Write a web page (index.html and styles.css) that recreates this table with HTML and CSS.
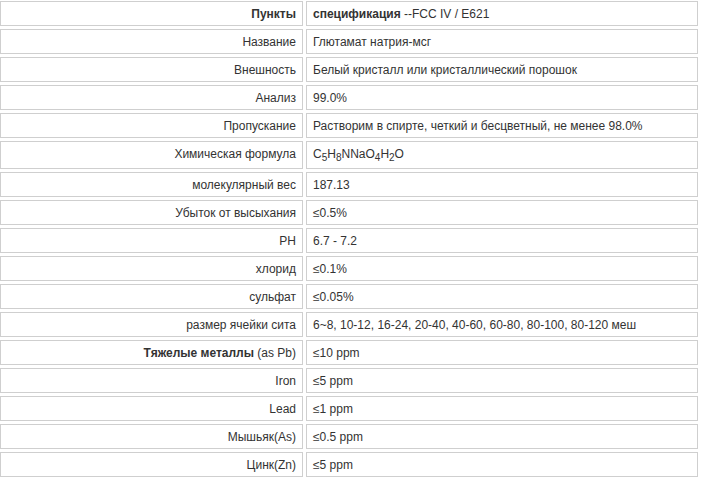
FILE: index.html
```html
<!DOCTYPE html>
<html lang="ru">
<head>
<meta charset="utf-8">
<link rel="stylesheet" href="styles.css">
</head>
<body>
<table class="spec">
  <tbody>
    <tr><td class="key"><b>Пункты</b></td><td class="val"><b>спецификация</b> --FCC IV / E621</td></tr>
    <tr><td class="key">Название</td><td class="val">Глютамат натрия-мсг</td></tr>
    <tr><td class="key">Внешность</td><td class="val">Белый кристалл или кристаллический порошок</td></tr>
    <tr><td class="key">Анализ</td><td class="val">99.0%</td></tr>
    <tr><td class="key">Пропускание</td><td class="val">Растворим в спирте, четкий и бесцветный, не менее 98.0%</td></tr>
    <tr class="formula"><td class="key">Химическая формула</td><td class="val">C<sub>5</sub>H<sub>8</sub>NNaO<sub>4</sub>H<sub>2</sub>O</td></tr>
    <tr><td class="key">молекулярный вес</td><td class="val">187.13</td></tr>
    <tr><td class="key">Убыток от высыхания</td><td class="val">≤0.5%</td></tr>
    <tr><td class="key">PH</td><td class="val">6.7 - 7.2</td></tr>
    <tr><td class="key">хлорид</td><td class="val">≤0.1%</td></tr>
    <tr><td class="key">сульфат</td><td class="val">≤0.05%</td></tr>
    <tr><td class="key">размер ячейки сита</td><td class="val">6~8, 10-12, 16-24, 20-40, 40-60, 60-80, 80-100, 80-120 меш</td></tr>
    <tr><td class="key"><b>Тяжелые металлы</b> (as Pb)</td><td class="val">≤10 ppm</td></tr>
    <tr><td class="key">Iron</td><td class="val">≤5 ppm</td></tr>
    <tr><td class="key">Lead</td><td class="val">≤1 ppm</td></tr>
    <tr><td class="key">Мышьяк(As)</td><td class="val">≤0.5 ppm</td></tr>
    <tr><td class="key">Цинк(Zn)</td><td class="val">≤5 ppm</td></tr>
  </tbody>
</table>
</body>
</html>
```
FILE: styles.css
```css
html, body {
  margin: 0;
  padding: 0;
  background: #fff;
}
body {
  font-family: "Liberation Sans", Arial, sans-serif;
  font-size: 12px;
  color: #333;
}
.spec {
  width: 704px;
  margin: -2px 0 0 -3px;
  border-collapse: separate;
  border-spacing: 3px;
}
.spec td {
  border: 1px solid #cfcfcf;
  padding: 5px 6px 4px;
  line-height: 14px;
  vertical-align: top;
}
.spec .key {
  width: 289px;
  text-align: right;
}
.spec .val {
  text-align: left;
}
.spec .formula td {
  padding-bottom: 7px;
}
.spec b {
  font-weight: bold;
}
.spec sub {
  font-size: 10px;
  line-height: 0;
  vertical-align: -3px;
}
```
